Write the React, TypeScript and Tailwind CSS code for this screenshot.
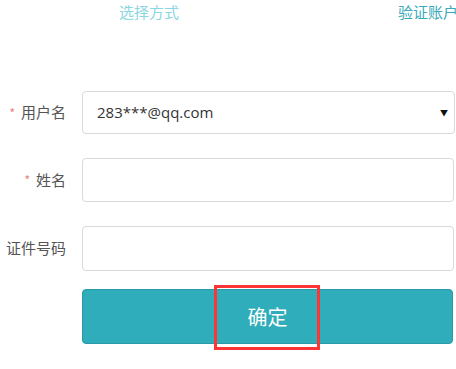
import React from "react";

const cjk = { fontFamily: '"Noto Sans CJK SC", "Noto Sans", sans-serif' };

export default function App() {
  return (
    <div className="relative w-[456px] h-[369px] bg-white overflow-hidden" style={cjk}>
      <div className="flex h-[23px] items-center text-[15px] leading-none whitespace-nowrap">
        <span className="shrink-0 ml-[119px] text-[#8ad6e2]">选择方式</span>
        <span className="shrink-0 ml-[219px] text-[#3aa9b9]">验证账户</span>
      </div>

      <div className="mt-[68px] flex flex-col">
        <div className="flex items-center h-[43px]">
          <div className="shrink-0 w-[82px] pr-[16px] flex justify-end items-center text-[15px] text-[#555] whitespace-nowrap">
            <span className="text-[#ec7a7a] text-[12px] mr-[6px]">*</span>
            <span>用户名</span>
          </div>
          <div className="flex-1 h-full mr-[1px] border border-[#d9d9d9] rounded-[4px] flex items-center justify-between pl-[14px] pr-[6px]">
            <span className="text-[15px] text-[#333]" style={{ fontFamily: '"Open Sans", "Noto Sans", sans-serif' }}>283***@qq.com</span>
            <span className="text-[8px] text-[#111]">▼</span>
          </div>
        </div>

        <div className="flex items-center h-[44px] mt-[24px]">
          <div className="shrink-0 w-[82px] pr-[16px] flex justify-end items-center text-[15px] text-[#555] whitespace-nowrap">
            <span className="text-[#ec7a7a] text-[12px] mr-[6px]">*</span>
            <span>姓名</span>
          </div>
          <div className="flex-1 h-full mr-[2px] border border-[#d9d9d9] rounded-[4px]" />
        </div>

        <div className="flex items-center h-[45px] mt-[24px]">
          <div className="shrink-0 w-[82px] pr-[16px] flex justify-end items-center text-[15px] text-[#555] whitespace-nowrap">
            <span className="text-[#ec7a7a] text-[12px] mr-[6px]">*</span>
            <span>证件号码</span>
          </div>
          <div className="flex-1 h-full mr-[2px] border border-[#d9d9d9] rounded-[4px]" />
        </div>

        <div className="flex mt-[18px]">
          <div className="shrink-0 w-[82px]" />
          <div className="relative flex-1 mr-[3px] h-[55px] bg-[#2fadba] border border-[#2899a5] rounded-[4px] flex items-center justify-center">
            <span className="text-white text-[20px]">确定</span>
            <div className="absolute left-[131px] top-[-5px] w-[106px] h-[65px] border-[3px] border-[#ff3535]" />
          </div>
        </div>
      </div>
    </div>
  );
}
